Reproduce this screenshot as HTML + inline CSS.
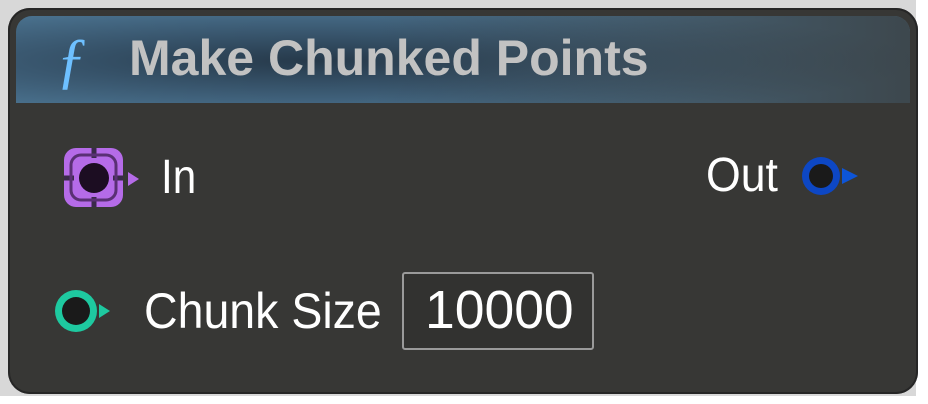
<!DOCTYPE html>
<html><head><style>
body{margin:0;width:928px;height:404px;background:#fff;position:relative;overflow:hidden;font-family:"Liberation Sans",sans-serif}
.bg{position:absolute;left:0;top:0;width:916px;height:396px;background:#d8d8d8}
.node{position:absolute;left:8px;top:8px;width:910px;height:386px;background:#373735;border-radius:22px;box-shadow:inset 0 0 0 2px #262626}
.hdr{position:absolute;left:16px;top:16px;width:894px;height:87px;border-radius:16px 16px 0 0;
background:radial-gradient(ellipse 600px 60px at 300px 45px,#26394a 0%,#3a5870 50%,#4e7896 100%);}
.hdr2{position:absolute;left:16px;top:16px;width:894px;height:87px;border-radius:16px 16px 0 0;background:linear-gradient(90deg,rgba(55,55,53,0) 40%,rgba(55,55,53,0.75) 100%)}
.t{position:absolute;color:#fff;white-space:nowrap;transform-origin:0 0}
</style></head><body>
<div class="bg"></div>
<div class="node"></div>
<div class="hdr"></div><div class="hdr2"></div>
<div class="t" style="left:56px;top:26px;font-family:'Liberation Serif',serif;font-style:italic;font-size:62px;color:#6ec0ff">ƒ</div>
<div class="t" style="left:129px;top:29px;font-size:50px;font-weight:bold;color:#c2c2c2">Make Chunked Points</div>
<svg style="position:absolute;left:60px;top:144px" width="84" height="68">
<rect x="4" y="4" width="59" height="59" rx="12" fill="#b56be8"/>
<path d="M4 34 h10 M53 34 h10 M34 4 v10 M34 53 v10" stroke="#3a2a4a" stroke-width="5"/>
<rect x="11" y="11" width="45" height="45" rx="10" fill="none" stroke="#5a3075" stroke-width="3"/>
<circle cx="34" cy="34" r="15" fill="#1c0d22"/>
<path d="M68 28 L79 35 L68 42Z" fill="#b56be8"/>
</svg>
<div class="t" style="left:161px;top:150px;font-size:48px;transform:scaleX(0.88)">In</div>
<div class="t" style="left:706px;top:148px;font-size:48px;transform:scaleX(0.93)">Out</div>
<svg style="position:absolute;left:800px;top:152px" width="62" height="50">
<circle cx="21" cy="24" r="19" fill="#0d47c4"/>
<circle cx="21" cy="24" r="12" fill="#1a1a1a"/>
<path d="M42 16 L58 24 L42 32Z" fill="#0d55d8"/>
</svg>
<svg style="position:absolute;left:52px;top:287px" width="72" height="50">
<circle cx="24" cy="24" r="21" fill="#1ec9a0"/>
<circle cx="24" cy="24" r="14" fill="#1a1a1a"/>
<path d="M47 17 L58 24 L47 31Z" fill="#1ec9a0"/>
</svg>
<div class="t" style="left:144px;top:282px;font-size:50px;transform:scaleX(0.93)">Chunk Size</div>
<div style="position:absolute;left:402px;top:272px;width:188px;height:74px;border:2px solid #9a9a9a;border-radius:3px;background:#323230"></div>
<div class="t" style="left:425px;top:279px;font-size:54px;transform:scaleX(0.99)">10000</div>
</body></html>
